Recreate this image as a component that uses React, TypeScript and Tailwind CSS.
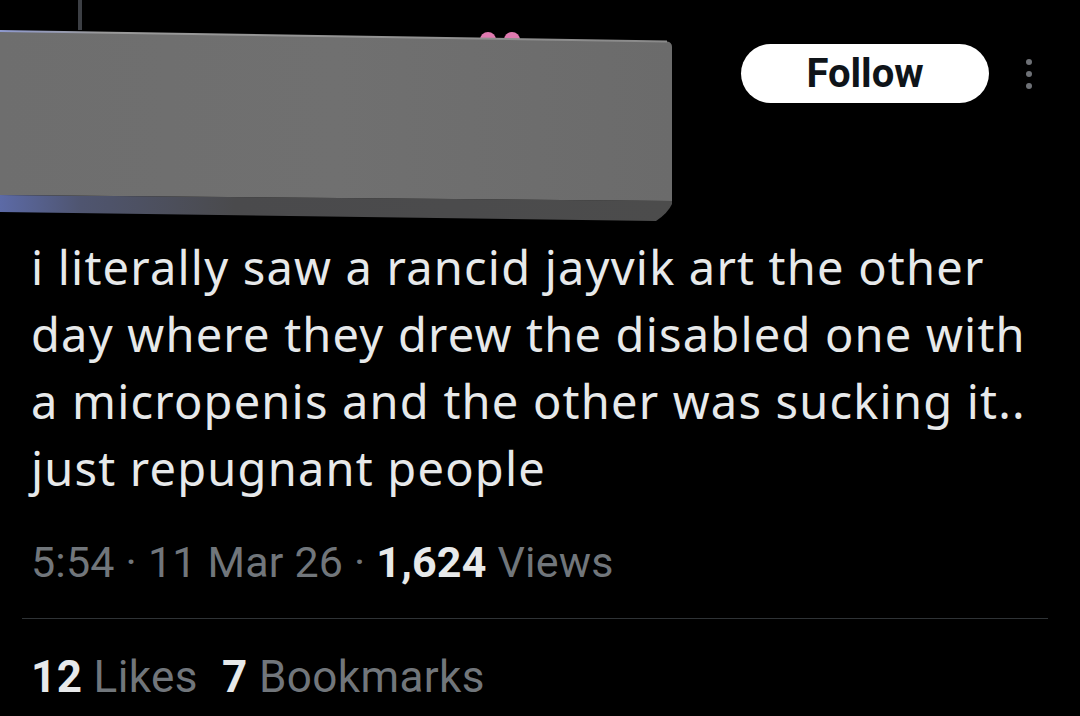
import React from 'react'

const bodyLines = [
  'i literally saw a rancid jayvik art the other',
  'day where they drew the disabled one with',
  'a micropenis and the other was sucking it..',
  'just repugnant people',
]

// grey redaction block covering the author row
function RedactionBlock() {
  return (
    <svg width="680" height="234" viewBox="0 0 680 234" className="block flex-none">
      <defs>
        <linearGradient id="front" x1="0" y1="0" x2="1" y2="0">
          <stop offset="0" stopColor="#6e6e6e" />
          <stop offset="0.5" stopColor="#707070" />
          <stop offset="1" stopColor="#6b6b6b" />
        </linearGradient>
        <linearGradient id="bottom" x1="0" y1="0" x2="1" y2="0">
          <stop offset="0" stopColor="#5c6aa6" />
          <stop offset="0.12" stopColor="#4f5570" />
          <stop offset="0.35" stopColor="#4a4a4c" />
          <stop offset="1" stopColor="#4c4c4c" />
        </linearGradient>
        <linearGradient id="edge" x1="0" y1="0" x2="1" y2="0">
          <stop offset="0" stopColor="#8f9ad0" />
          <stop offset="0.15" stopColor="#9a9a9a" />
          <stop offset="1" stopColor="#8a8a8a" />
        </linearGradient>
      </defs>
      <line x1="80" y1="0" x2="80" y2="30" stroke="#3c3f44" strokeWidth="4" />
      <circle cx="488" cy="40" r="8" fill="#e07ab0" />
      <circle cx="512" cy="40" r="8" fill="#e07ab0" />
      <path d="M0 195 L672 201 L672 204 Q668 213 656 221 L0 212 Z" fill="url(#bottom)" />
      <path d="M0 31 L667 41.5 Q672 42 672 47 L672 201 L0 195 Z" fill="url(#front)" />
      <path d="M0 31 L667 41.5" stroke="url(#edge)" strokeWidth="2" />
    </svg>
  )
}

export default function App() {
  return (
    <div className="w-[1080px] h-[716px] overflow-hidden bg-black font-['Roboto',sans-serif]">
      {/* header */}
      <div className="flex h-[234px]">
        <RedactionBlock />
        <div className="flex flex-1 items-start pt-[44px] pl-[61px]">
          <button className="w-[248px] h-[59px] rounded-full bg-white text-[#0f1419] text-[40px] font-bold leading-none flex items-center justify-center">
            Follow
          </button>
          <div className="ml-[37px] mt-[15px] flex flex-col gap-[6px]">
            <span className="block w-[6px] h-[6px] rounded-full bg-[#6e7176]" />
            <span className="block w-[6px] h-[6px] rounded-full bg-[#6e7176]" />
            <span className="block w-[6px] h-[6px] rounded-full bg-[#6e7176]" />
          </div>
        </div>
      </div>

      {/* tweet text */}
      <div className="pl-[31px] font-['Noto_Sans',sans-serif] font-normal text-[47px] tracking-[1.2px] leading-[67px] text-[#e7e9ea] whitespace-nowrap">
        {bodyLines.map((line, i) => (
          <div key={i}>{line}</div>
        ))}
      </div>

      {/* timestamp */}
      <div className="mt-[34px] pl-[31px] text-[43px] tracking-[0.2px] leading-[52px] text-[#71767b] whitespace-nowrap">
        5:54 · 11 Mar 26 · <span className="font-bold text-[#e7e9ea]">1,624</span> Views
      </div>

      <div className="mt-[30px] ml-[22px] mr-[32px] h-px bg-[#2f3336]" />

      {/* stats */}
      <div className="mt-[33px] pl-[31px] text-[44px] tracking-[0.4px] leading-[50px] text-[#71767b] whitespace-nowrap">
        <span className="font-bold text-[#e7e9ea]">12</span> Likes
        <span className="ml-[24px] font-bold text-[#e7e9ea]">7</span> Bookmarks
      </div>
    </div>
  )
}
